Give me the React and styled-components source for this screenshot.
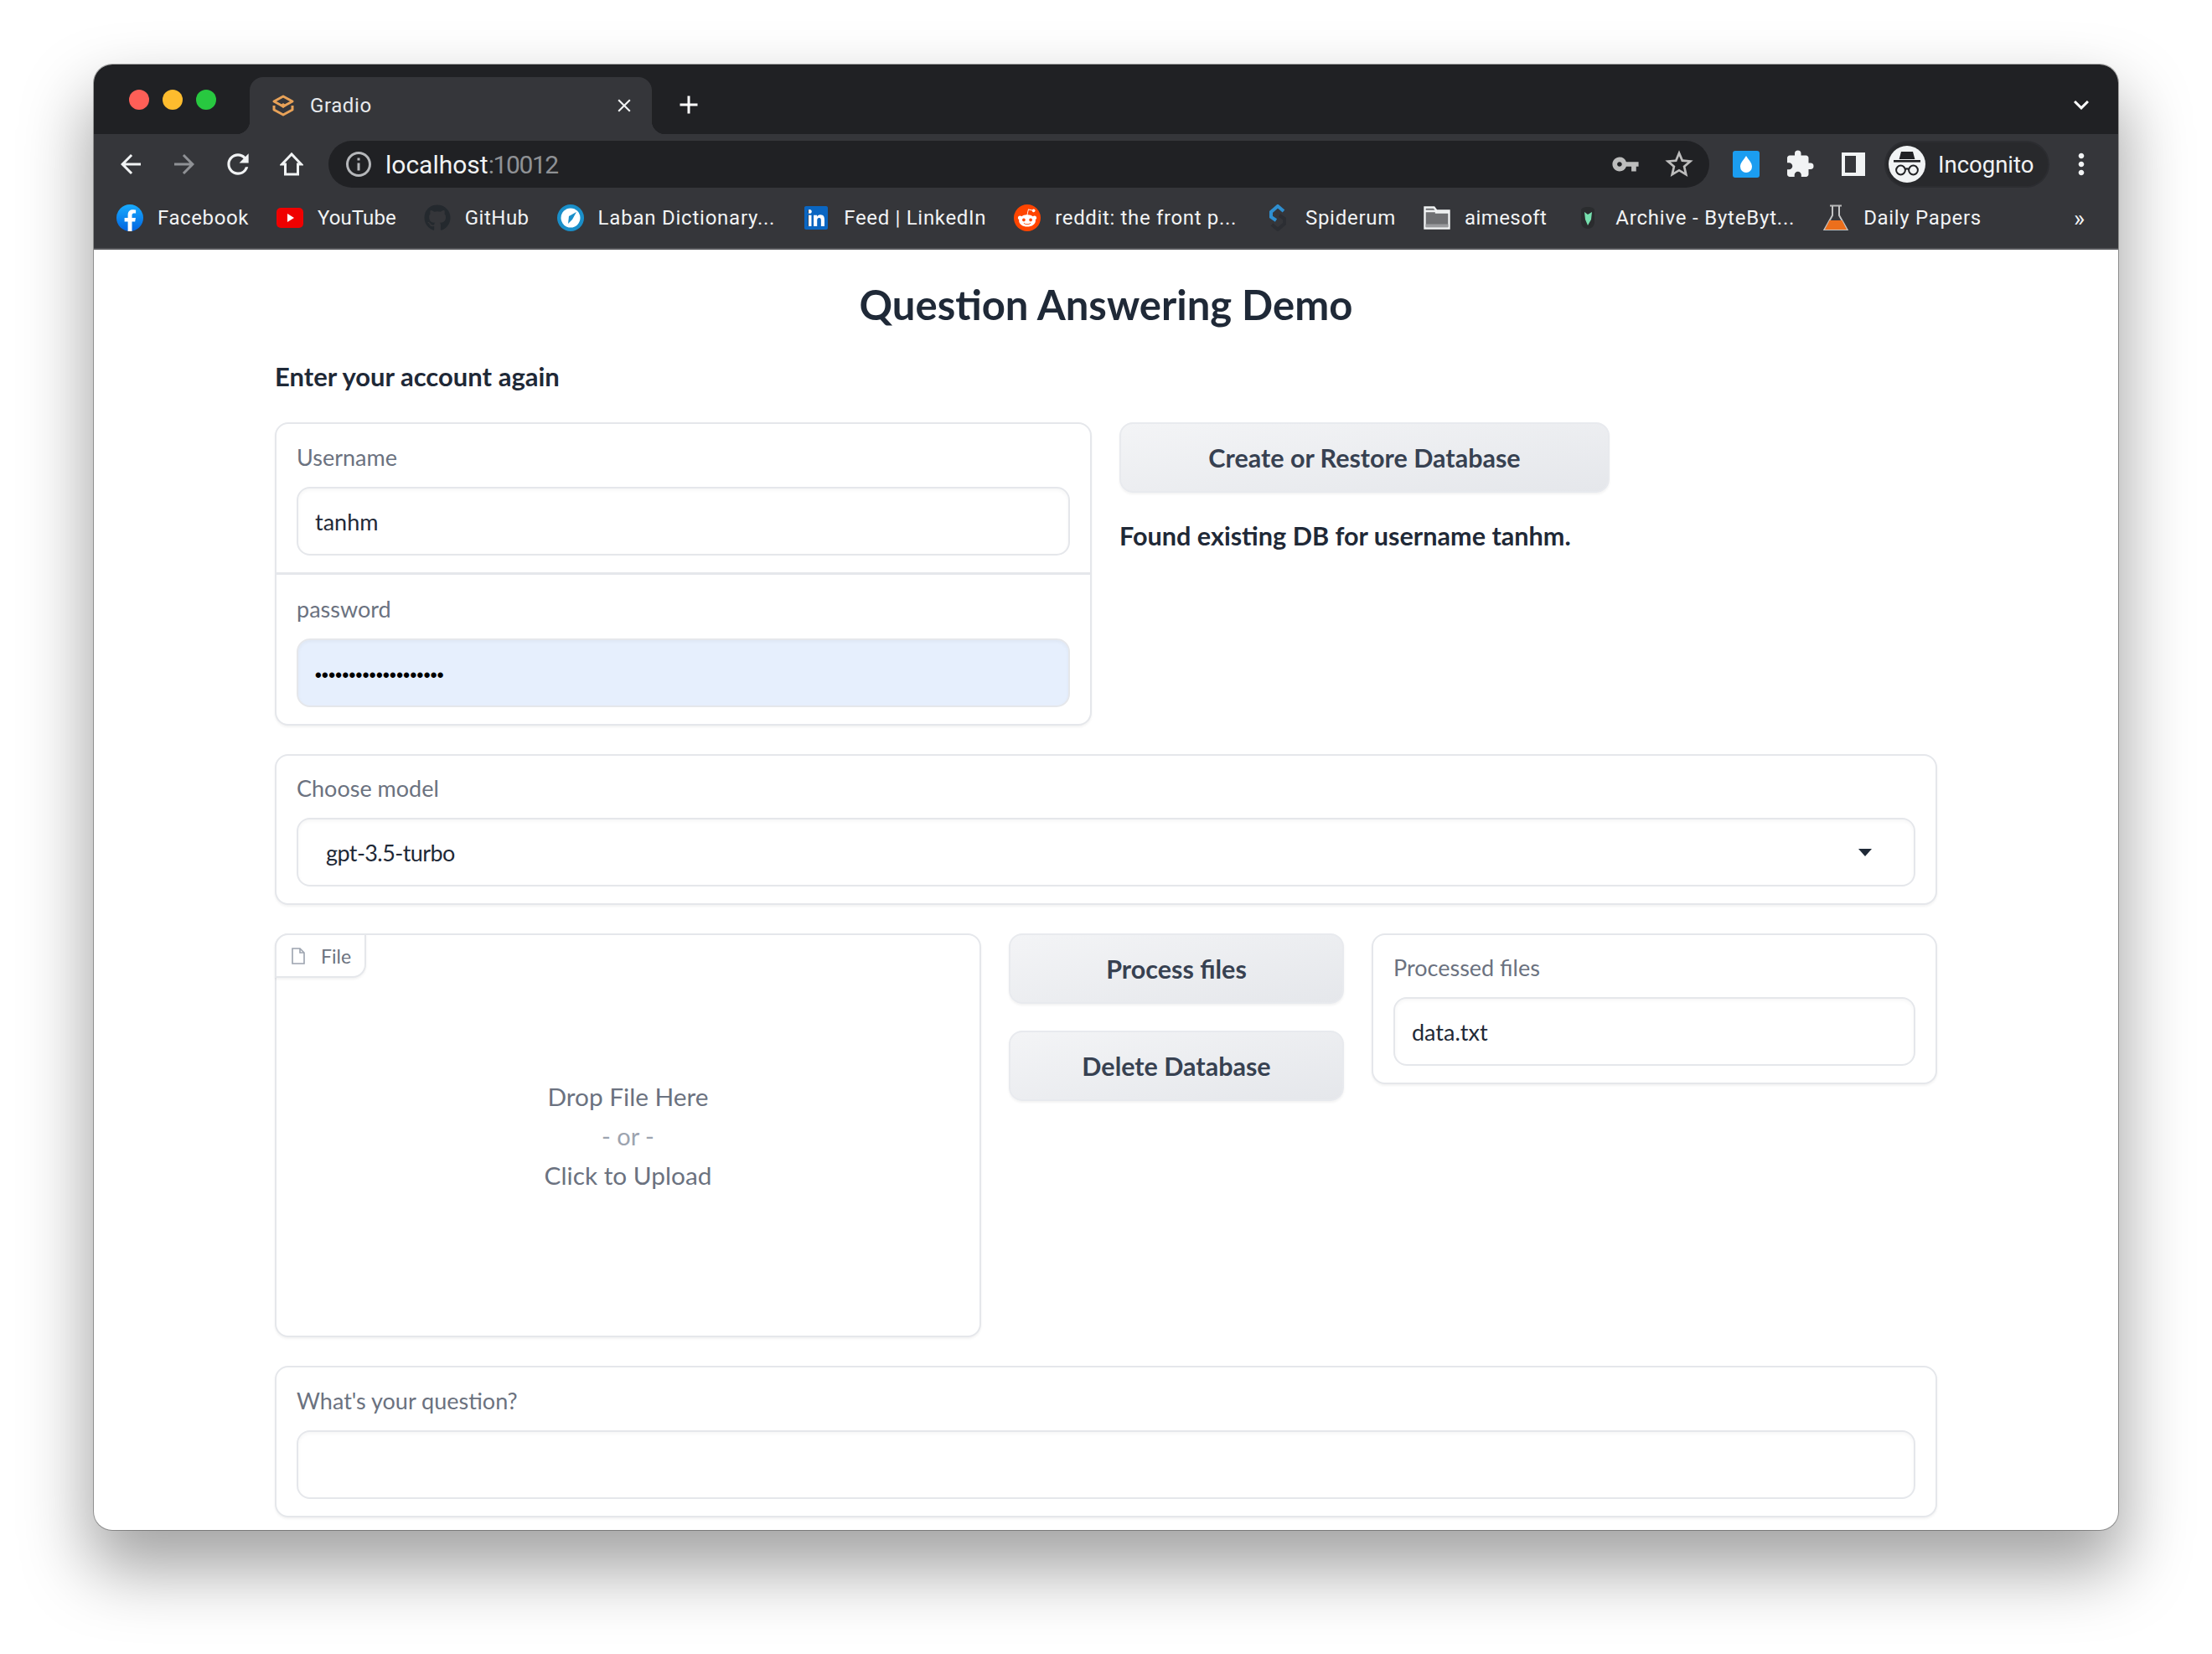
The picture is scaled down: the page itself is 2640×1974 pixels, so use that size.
import React from 'react';
import styled, { createGlobalStyle } from 'styled-components';
import {
  MdArrowBack, MdArrowForward, MdRefresh, MdInfoOutline, MdVpnKey, MdStarBorder, MdExtension,
  MdMoreVert, MdClose, MdAdd, MdKeyboardArrowDown,
} from 'react-icons/md';
import { FaGithub, FaLinkedin, FaRedditAlien } from 'react-icons/fa';

const Global = createGlobalStyle`
  html, body { margin: 0; padding: 0; background: #fff; }
  * { box-sizing: border-box; }
`;

const Page = styled.div`
  width: 2640px;
  height: 1974px;
  padding: 77px 112px 0;
  overflow: hidden;
`;

const Window = styled.div`
  height: 1749px;
  border-radius: 22px;
  overflow: hidden;
  background: #fff;
  display: flex;
  flex-direction: column;
  box-shadow: 0 42px 80px 6px rgba(0, 0, 0, .36), 0 0 0 1px rgba(0, 0, 0, .3);
`;

/* chrome */
const TabStrip = styled.div`
  height: 83px;
  flex: none;
  background: #202124;
  display: flex;
  align-items: flex-end;
  position: relative;
`;

const Lights = styled.div`
  width: 186px;
  height: 83px;
  padding-left: 42px;
  display: flex;
  align-items: center;
  gap: 16px;
`;

const Light = styled.span`
  width: 24px;
  height: 24px;
  border-radius: 50%;
  background: ${p => p.$c};
`;

const Tab = styled.div`
  width: 480px;
  height: 68px;
  background: #35363a;
  border-radius: 16px 16px 0 0;
  display: flex;
  align-items: center;
  padding: 0 20px 0 26px;
  position: relative;
  color: #e8eaed;
  font: 400 24px Roboto, sans-serif;
  &::before, &::after {
    content: '';
    position: absolute;
    bottom: 0;
    width: 16px;
    height: 16px;
  }
  &::before { left: -16px; background: radial-gradient(circle at 0 0, #202124 16px, #35363a 16.5px); }
  &::after { right: -16px; background: radial-gradient(circle at 100% 0, #202124 16px, #35363a 16.5px); }
`;

const TabTitle = styled.span`
  margin-left: 18px;
  flex: 1;
  letter-spacing: .6px;
`;

const StripButton = styled.span`
  color: #fff;
  display: flex;
  margin: ${p => p.$m};
  align-self: center;
`;

const Toolbar = styled.div`
  height: 72px;
  flex: none;
  background: #35363a;
  display: flex;
  align-items: flex-start;
  padding: 8px 0 0 12px;
`;

const Slot = styled.span`
  width: 64px;
  height: 56px;
  flex: none;
  display: flex;
  align-items: center;
  justify-content: center;
  color: ${p => p.$c || '#f1f3f4'};
  margin-left: ${p => p.$ml || 0}px;
`;

const UrlBar = styled.div`
  width: 1648px;
  height: 56px;
  margin-left: 12px;
  border-radius: 28px;
  background: #202124;
  display: flex;
  align-items: center;
  padding: 0 4px 0 18px;
  font: 400 30px Roboto, sans-serif;
  color: #f1f3f4;
`;

const UrlText = styled.span`
  margin-left: 14px;
  flex: 1;
  b { font-weight: 400; color: #8f9195; letter-spacing: -1.4px; }
`;

const ExtGroup = styled.div`
  display: flex;
  margin-left: 12px;
`;

const DropBadge = styled.span`
  width: 32px;
  height: 32px;
  border-radius: 3px;
  background: #1b9df0;
  display: flex;
  align-items: center;
  justify-content: center;
`;

const Pill = styled.div`
  width: 197px;
  height: 56px;
  margin-left: 5px;
  border-radius: 28px;
  border: 2px solid #2c2d31;
  background: #28292c;
  display: flex;
  align-items: center;
  padding-left: 3px;
  color: #f1f3f4;
  font: 400 27.5px Roboto, sans-serif;
  gap: 15px;
`;

const Avatar = styled.span`
  width: 44px;
  height: 44px;
  border-radius: 50%;
  background: #f1f3f4;
  display: flex;
  align-items: center;
  justify-content: center;
`;

const Bookmarks = styled.div`
  height: 66px;
  flex: none;
  background: #35363a;
  border-bottom: 2px solid #55565a;
  padding: 0 0 8px 27px;
  display: flex;
  align-items: center;
  gap: 33px;
  font: 400 24px Roboto, sans-serif;
  color: #f1f3f4;
`;

const Bookmark = styled.div`
  display: flex;
  align-items: center;
  gap: 17px;
  white-space: nowrap;
  letter-spacing: ${p => p.$ls}px;
`;

const Fav = styled.span`
  width: 32px;
  height: 32px;
  flex: none;
  display: flex;
  align-items: center;
  justify-content: center;
`;

const LinkedinBack = styled.span`
  display: flex;
  background: linear-gradient(#fff, #fff) center / 60% 70% no-repeat;
`;

const RedditBadge = styled.span`
  width: 32px;
  height: 32px;
  border-radius: 50%;
  background: #ff4500;
  display: flex;
  align-items: center;
  justify-content: center;
`;

const More = styled.span`
  margin-left: auto;
  margin-right: 40px;
  font-size: 28px;
`;

/* gradio page */
const Main = styled.main`
  flex: 1;
  min-height: 0;
  overflow: hidden;
  padding: 33px 216px 0 216px;
  font-family: Lato, "Noto Sans", sans-serif;
  color: #1f2937;
  display: flex;
  flex-direction: column;
`;

const Title = styled.h1`
  margin: 0;
  text-align: center;
  font-size: 49px;
  line-height: 64px;
  font-weight: 700;
`;

const Heading = styled.h2`
  margin: 34px 0 35px;
  font-size: 31px;
  line-height: 40px;
  font-weight: 700;
`;

const Rows = styled.div`
  display: flex;
  flex-direction: column;
  gap: 34px;
`;

const Row = styled.div`
  display: grid;
  grid-template-columns: ${p => p.$cols};
  column-gap: 33px;
  align-items: start;
`;

const Card = styled.div`
  border: 2px solid #e5e7eb;
  border-radius: 16px;
  background: #fff;
  box-shadow: 0 2px 3px rgba(0, 0, 0, .05);
  position: relative;
`;

const Block = styled.div`
  padding: ${p => p.$pt || 22}px 24px 20px;
  & + & { border-top: 3px solid #e5e7eb; padding-top: 23px; }
`;

const Label = styled.div`
  font-size: 27px;
  line-height: 36px;
  color: #6b7280;
  margin-bottom: 17px;
`;

const Field = styled.div`
  height: 82px;
  border: 2px solid #e5e7eb;
  border-radius: 16px;
  background: ${p => p.$fill ? '#e6effd' : '#fff'};
  box-shadow: inset 0 2px 4px rgba(0, 0, 0, .04);
  display: flex;
  align-items: center;
  justify-content: space-between;
  padding: 0 ${p => p.$pad || 20}px;
  font-size: 27px;
  color: #1f2937;
`;

const Dots = styled.span`
  color: #000;
  margin-top: 5px;
  font: 700 22px "Liberation Sans", sans-serif;
  letter-spacing: .4px;
`;

const ModelName = styled.span`
  letter-spacing: -.6px;
`;

const Caret = styled.span`
  width: 0;
  height: 0;
  margin-right: 17px;
  border-left: 8px solid transparent;
  border-right: 8px solid transparent;
  border-top: 9px solid #1f2937;
`;

const Button = styled.button`
  display: block;
  width: 100%;
  height: 84px;
  border: 2px solid #e8eaee;
  border-radius: 16px;
  background: linear-gradient(to bottom right, #f3f4f6, #e5e7eb);
  box-shadow: 0 2px 3px rgba(0, 0, 0, .05);
  color: #374151;
  font: 700 30.5px Lato, "Noto Sans", sans-serif;
`;

const Status = styled.p`
  margin: 32px 0 0;
  font-size: 30.6px;
  line-height: 40px;
  font-weight: 700;
  color: #1f2937;
`;

const ButtonStack = styled.div`
  display: flex;
  flex-direction: column;
  gap: 32px;
`;

const FileTag = styled.div`
  position: absolute;
  left: -2px;
  top: -2px;
  width: 109px;
  height: 53px;
  display: flex;
  align-items: center;
  gap: 19px;
  padding-left: 18px;
  border: 2px solid #e5e7eb;
  border-radius: 16px 0 16px 0;
  box-shadow: 0 2px 3px rgba(0, 0, 0, .05);
  background: #fff;
  font-size: 23px;
  color: #6b7280;
`;

const DropZone = styled.div`
  height: 478px;
  display: flex;
  flex-direction: column;
  align-items: center;
  justify-content: center;
  font-size: 29.8px;
  line-height: 47px;
  color: #6b7280;
`;

const Or = styled.div`
  color: #9ca3af;
  font-size: 29px;
`;

const GradioMark = () => (
  <svg width="28" height="26" viewBox="0 0 28 26" fill="none" stroke="#e8a258" strokeWidth="3" strokeLinejoin="round">
    <path d="M14 2 25 8 14 14 3 8Z" />
    <path d="M3 13v5l11 6 11-6v-5" />
    <path d="M14 10l4 3-4 3-4-3Z" fill="#e8a258" stroke="none" />
  </svg>
);

const HomeIcon = () => (
  <svg width="28" height="30" viewBox="0 0 28 30" fill="none" stroke="#f1f3f4" strokeWidth="3" strokeLinejoin="miter">
    <path d="M14 3 2.5 15H6.5V27H21.5V15H25.5Z" />
  </svg>
);

const Facebook = () => (
  <svg width="32" height="32" viewBox="0 0 32 32">
    <defs>
      <linearGradient id="fbg" x1="0" y1="0" x2="0" y2="1">
        <stop offset="0" stopColor="#18acfe" />
        <stop offset="1" stopColor="#0163e0" />
      </linearGradient>
    </defs>
    <circle cx="16" cy="16" r="16" fill="url(#fbg)" />
    <path d="M22.2 20.6l.7-4.6h-4.4v-3c0-1.3.6-2.5 2.6-2.5h2V6.6s-1.8-.3-3.5-.3c-3.6 0-6 2.2-6 6.2V16h-4v4.6h4V32a16 16 0 0 0 4.9 0V20.6Z" fill="#fff" />
  </svg>
);

const YouTube = () => (
  <svg width="32" height="32" viewBox="0 0 32 32">
    <rect y="4" width="32" height="24" rx="5" fill="#f00000" />
    <path d="M13 11v10l8-5Z" fill="#fff" />
  </svg>
);

const Laban = () => (
  <svg width="32" height="32" viewBox="0 0 32 32">
    <circle cx="16" cy="16" r="16" fill="#1a8fc9" />
    <circle cx="16" cy="16" r="11.5" fill="#fff" />
    <path d="M23 9 18 18 13 23 14 14Z" fill="#1a8fc9" />
  </svg>
);

const Spiderum = () => (
  <svg width="26" height="32" viewBox="0 0 26 32" fill="none" strokeWidth="4">
    <path d="M20 8 13 2 5 9v6l6 4" stroke="#2f8fd0" />
    <path d="M6 24l7 6 8-7v-6l-6-4" stroke="#2c2e33" />
  </svg>
);

const Folder = () => (
  <svg width="32" height="28" viewBox="0 0 32 28">
    <path d="M1.5 1.5h11l3 4h15v21h-29Z" fill="#6f7073" stroke="#f1f3f4" strokeWidth="2.4" />
    <path d="M2 6h13v1.5h16" stroke="#f1f3f4" strokeWidth="2.4" fill="none" />
    <rect x="2.5" y="21.5" width="27" height="3.6" fill="#9a9b9e" />
  </svg>
);

const Owl = () => (
  <svg width="20" height="28" viewBox="0 0 20 28">
    <path d="M2 5C2 2 6 1 10 1s8 1 8 4v14c0 5-4 8-8 8s-8-3-8-8Z" fill="#2a2c2e" />
    <path d="M6 7l4 3 5-3-1 9-4 7-3-7Z" fill="#76e0ae" />
  </svg>
);

const Flask = () => (
  <svg width="32" height="32" viewBox="0 0 32 32">
    <path d="M9 1.5h14" stroke="#b9b9b9" strokeWidth="2" />
    <path d="M12 2v11L2.5 30h27L20 13V2" fill="none" stroke="#c3c3c3" strokeWidth="2" />
    <path d="M8.6 19h14.8L29 30H3Z" fill="#ec6f1c" />
  </svg>
);

const Incognito = () => (
  <svg width="36" height="34" viewBox="0 0 36 34" fill="#202124">
    <path d="M11 2h14l2.4 9H8.6Z" />
    <rect x="2" y="12" width="32" height="2.6" />
    <g fill="none" stroke="#202124" strokeWidth="2">
      <circle cx="10.5" cy="24" r="5.4" />
      <circle cx="25.5" cy="24" r="5.4" />
      <path d="M16 23c1.3-.8 2.7-.8 4 0" />
    </g>
  </svg>
);

const FileIcon = () => (
  <svg width="16" height="20" viewBox="0 0 16 20" fill="none" stroke="#9ca3af" strokeWidth="1.6">
    <path d="M1 1h9l5 5v13H1Z" />
    <path d="M10 1v5h5" />
  </svg>
);

const Drop = () => (
  <svg width="16" height="22" viewBox="0 0 16 22" fill="#fff">
    <path d="M8 1c3 5 7 8 7 13a7 7 0 0 1-14 0C1 9 5 6 8 1Z" />
  </svg>
);

const Sidebar = () => (
  <svg width="28" height="28" viewBox="0 0 28 28">
    <path d="M0 0h28v28H0ZM4 4v20h13V4Z" fill="#f1f3f4" fillRule="evenodd" />
  </svg>
);

const bookmarks = [
  { name: 'Facebook', ls: .6, icon: <Facebook /> },
  { name: 'YouTube', ls: .07, icon: <YouTube /> },
  { name: 'GitHub', ls: .5, icon: <FaGithub size={32} color="#24292e" /> },
  { name: 'Laban Dictionary...', ls: .77, icon: <Laban /> },
  { name: 'Feed | LinkedIn', ls: .68, icon: <LinkedinBack><FaLinkedin size={32} color="#0a66c2" /></LinkedinBack> },
  { name: 'reddit: the front p...', ls: .65, icon: <RedditBadge><FaRedditAlien size={24} color="#fff" /></RedditBadge> },
  { name: 'Spiderum', ls: .75, icon: <Spiderum /> },
  { name: 'aimesoft', ls: .4, icon: <Folder /> },
  { name: 'Archive - ByteByt...', ls: .8, icon: <Owl /> },
  { name: 'Daily Papers', ls: .67, icon: <Flask /> },
];

export default function App() {
  return (
    <Page>
      <Global />
      <Window>
        <TabStrip>
          <Lights>
            <Light $c="#ff5f57" />
            <Light $c="#febc2e" />
            <Light $c="#28c840" />
          </Lights>
          <Tab>
            <GradioMark />
            <TabTitle>Gradio</TabTitle>
            <MdClose size={26} color="#f1f3f4" />
          </Tab>
          <StripButton $m="12px 0 0 26px"><MdAdd size={36} /></StripButton>
          <StripButton $m="12px 26px 0 auto"><MdKeyboardArrowDown size={36} /></StripButton>
        </TabStrip>
        <Toolbar>
          <Slot><MdArrowBack size={36} /></Slot>
          <Slot $c="#8f9195"><MdArrowForward size={36} /></Slot>
          <Slot><MdRefresh size={38} /></Slot>
          <Slot><HomeIcon /></Slot>
          <UrlBar>
            <MdInfoOutline size={36} color="#b5b7ba" />
            <UrlText>localhost<b>:10012</b></UrlText>
            <Slot $c="#bdbdbd"><MdVpnKey size={34} /></Slot>
            <Slot $c="#bdbdbd"><MdStarBorder size={40} /></Slot>
          </UrlBar>
          <ExtGroup>
            <Slot><DropBadge><Drop /></DropBadge></Slot>
            <Slot><MdExtension size={36} /></Slot>
            <Slot><Sidebar /></Slot>
          </ExtGroup>
          <Pill>
            <Avatar><Incognito /></Avatar>
            Incognito
          </Pill>
          <Slot $ml={6}><MdMoreVert size={40} /></Slot>
        </Toolbar>
        <Bookmarks>
          {bookmarks.map(b => (
            <Bookmark key={b.name} $ls={b.ls}>
              <Fav>{b.icon}</Fav>
              {b.name}
            </Bookmark>
          ))}
          <More>»</More>
        </Bookmarks>
        <Main>
          <Title>Question Answering Demo</Title>
          <Heading>Enter your account again</Heading>
          <Rows>
            <Row $cols="975px 585px">
              <Card>
                <Block>
                  <Label>Username</Label>
                  <Field>tanhm</Field>
                </Block>
                <Block>
                  <Label>password</Label>
                  <Field $fill><Dots>•••••••••••••••••••</Dots></Field>
                </Block>
              </Card>
              <div>
                <Button>Create or Restore Database</Button>
                <Status>Found existing DB for username tanhm.</Status>
              </div>
            </Row>
            <Row $cols="1fr">
              <Card>
                <Block $pt={21}>
                  <Label>Choose model</Label>
                  <Field $pad={33}><ModelName>gpt-3.5-turbo</ModelName><Caret /></Field>
                </Block>
              </Card>
            </Row>
            <Row $cols="843px 400px 1fr">
              <Card>
                <FileTag><FileIcon />File</FileTag>
                <DropZone>
                  <div>Drop File Here</div>
                  <Or>- or -</Or>
                  <div>Click to Upload</div>
                </DropZone>
              </Card>
              <ButtonStack>
                <Button>Process files</Button>
                <Button>Delete Database</Button>
              </ButtonStack>
              <Card>
                <Block $pt={21}>
                  <Label>Processed files</Label>
                  <Field>data.txt</Field>
                </Block>
              </Card>
            </Row>
            <Row $cols="1fr">
              <Card>
                <Block>
                  <Label>What's your question?</Label>
                  <Field />
                </Block>
              </Card>
            </Row>
          </Rows>
        </Main>
      </Window>
    </Page>
  );
}
